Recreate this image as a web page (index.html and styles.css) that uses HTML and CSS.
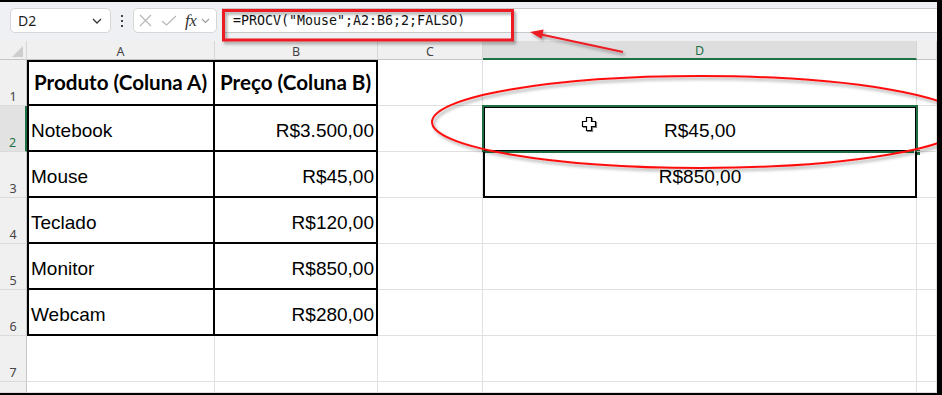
FILE: index.html
```html
<!DOCTYPE html>
<html lang="pt-BR">
<head>
<meta charset="utf-8">
<title>PROCV</title>
<link rel="stylesheet" href="styles.css">
</head>
<body>
<div class="frame">
  <div class="screen">
    <div class="toolbar">
      <div class="namebox">
        <span class="ref">D2</span>
        <svg class="chev" width="10" height="6" viewBox="0 0 10 6"><path d="M1 1 L5 5 L9 1" fill="none" stroke="#333" stroke-width="1.3"/></svg>
      </div>
      <div class="kebab"><i></i><i></i><i></i></div>
      <div class="fxbox">
        <svg width="13" height="13" viewBox="0 0 13 13"><path d="M1 1 L12 12 M12 1 L1 12" stroke="#b8b8b8" stroke-width="1.2" fill="none"/></svg>
        <svg class="ok" width="16" height="11" viewBox="0 0 16 11"><path d="M1 6 L5.5 10 L15 1" stroke="#b8b8b8" stroke-width="1.2" fill="none"/></svg>
        <span class="fx">fx</span>
        <svg width="9" height="6" viewBox="0 0 9 6"><path d="M1 1 L4.5 4.5 L8 1" fill="none" stroke="#9a9a9a" stroke-width="1.1"/></svg>
      </div>
      <div class="formula">=PROCV("Mouse";A2:B6;2;FALSO)</div>
    </div>

    <div class="sheet">
      <div class="h corner"><span class="tri"></span></div>
      <div class="h">A</div>
      <div class="h">B</div>
      <div class="h">C</div>
      <div class="h sel">D</div>
      <div class="h"></div>

      <div class="r">1</div>
      <div class="c t tl tt th">Produto (Coluna A)</div>
      <div class="c t tt th">Preço (Coluna B)</div>
      <div class="c"></div>
      <div class="c"></div>
      <div class="c"></div>

      <div class="r sel">2</div>
      <div class="c t tl">Notebook</div>
      <div class="c t num">R$3.500,00</div>
      <div class="c"></div>
      <div class="c t tl tt mid active">R$45,00<span class="selbox"><span class="handle"></span></span></div>
      <div class="c"></div>

      <div class="r">3</div>
      <div class="c t tl">Mouse</div>
      <div class="c t num">R$45,00</div>
      <div class="c"></div>
      <div class="c t tl mid">R$850,00</div>
      <div class="c"></div>

      <div class="r">4</div>
      <div class="c t tl">Teclado</div>
      <div class="c t num">R$120,00</div>
      <div class="c"></div>
      <div class="c"></div>
      <div class="c"></div>

      <div class="r">5</div>
      <div class="c t tl">Monitor</div>
      <div class="c t num">R$850,00</div>
      <div class="c"></div>
      <div class="c"></div>
      <div class="c"></div>

      <div class="r">6</div>
      <div class="c t tl">Webcam</div>
      <div class="c t num">R$280,00</div>
      <div class="c"></div>
      <div class="c"></div>
      <div class="c"></div>

      <div class="r">7</div>
      <div class="c"></div>
      <div class="c"></div>
      <div class="c"></div>
      <div class="c"></div>
      <div class="c"></div>

      <div class="r"></div>
      <div class="c"></div>
      <div class="c"></div>
      <div class="c"></div>
      <div class="c"></div>
      <div class="c"></div>
    </div>

    <!-- hand-drawn callouts: box on the formula, arrow, ellipse round the result, pointer -->
    <svg class="marks" width="942" height="395" viewBox="0 0 942 395">
      <defs>
        <filter id="shade" x="-10%" y="-30%" width="120%" height="170%">
          <feDropShadow dx="2" dy="2.5" stdDeviation="1.6" flood-color="#000" flood-opacity="0.35"/>
        </filter>
        <filter id="shade2" x="-20%" y="-20%" width="140%" height="140%">
          <feDropShadow dx="1" dy="1" stdDeviation="0.6" flood-color="#000" flood-opacity="0.5"/>
        </filter>
      </defs>
      <rect x="223.5" y="10.5" width="289" height="29.5" fill="none" stroke="#ec1c24" stroke-width="3" filter="url(#shade)"/>
      <g filter="url(#shade)">
        <line x1="623" y1="52" x2="540" y2="34.2" stroke="#ec1c24" stroke-width="2"/>
        <polygon points="530,32 543.6,29.6 541.6,38.8" fill="#ec1c24"/>
      </g>
      <ellipse cx="700" cy="122" rx="268" ry="46" fill="none" stroke="#ff1010" stroke-width="2" filter="url(#shade)"/>
      <path d="M586.5 117.5 h5 v4 h4 v5 h-4 v4 h-5 v-4 h-4 v-5 h4 z" fill="#fff" stroke="#000" stroke-width="1.2" filter="url(#shade2)"/>
    </svg>
  </div>
</div>
</body>
</html>
```

FILE: styles.css
```css
body {
  margin: 0;
  background: #fff;
}

.frame {
  width: 942px;
  height: 395px;
  box-sizing: border-box;
  border-top: 2px solid #000;
  border-right: 5px solid #000;
  border-bottom: 2px solid #000;
}

.screen {
  position: relative;
  width: 937px;
  height: 391px;
  overflow: hidden;
  display: flex;
  flex-direction: column;
  background: #fff;
}

/* formula bar */
.toolbar {
  flex: none;
  height: 39px;
  box-sizing: border-box;
  padding: 6px 0 8px 10px;
  background: #eff0f3;
  display: flex;
  align-items: stretch;
}

.namebox {
  width: 101px;
  box-sizing: border-box;
  background: #fff;
  border: 1px solid #d6d6d6;
  border-radius: 5px;
  display: flex;
  align-items: center;
  justify-content: space-between;
  padding: 0 8px 0 7px;
  font: 14px "Noto Sans", sans-serif;
  color: #1f1f1f;
}

.kebab {
  width: 22px;
  display: flex;
  flex-direction: column;
  align-items: center;
  justify-content: center;
  gap: 3px;
}

.kebab i {
  width: 2px;
  height: 2px;
  background: #444;
}

.fxbox {
  width: 84px;
  box-sizing: border-box;
  background: #fff;
  border: 1px solid #d6d6d6;
  border-radius: 5px;
  display: flex;
  align-items: center;
  padding-left: 5px;
  gap: 8px;
}

.fxbox .ok {
  margin-left: 1px;
}

.fx {
  font: italic 17px "Liberation Serif", serif;
  color: #333;
  margin-right: -3px;
  letter-spacing: -0.5px;
}

.formula {
  flex: 1;
  margin-left: 5px;
  background: #fff;
  border-top: 1px solid #c9c9c9;
  border-bottom: 1px solid #c9c9c9;
  padding-left: 11px;
  display: flex;
  align-items: center;
  font: 13.3px "DejaVu Sans Mono", monospace;
  color: #111;
  white-space: pre;
}

/* worksheet grid */
.sheet {
  flex: 1;
  display: grid;
  grid-template-columns: 27px 188px 163px 105px 434px 20px;
  grid-template-rows: 19px repeat(7, 46px) 1fr;
}

.h {
  box-sizing: border-box;
  background: #f0f0f0;
  border-right: 1px solid #d6d6d6;
  border-bottom: 1px solid #c4c4c4;
  display: flex;
  align-items: center;
  justify-content: center;
  padding-top: 2px;
  font: 12.5px "Noto Sans", sans-serif;
  color: #444;
}

.h.sel {
  background: #dedede;
  border-bottom: 2px solid #1e7145;
  color: #1e7145;
}

.corner {
  justify-content: flex-end;
  align-items: flex-end;
  padding: 0 3px 2px 0;
}

.tri {
  width: 0;
  height: 0;
  border-left: 11px solid transparent;
  border-bottom: 11px solid #cdcdcd;
}

.r {
  box-sizing: border-box;
  background: #f0f0f0;
  border-right: 1px solid #c8c8c8;
  border-bottom: 1px solid #dadada;
  display: flex;
  align-items: flex-end;
  justify-content: center;
  padding-bottom: 0;
  font: 12.5px "Noto Sans", sans-serif;
  color: #444;
}

.r.sel {
  background: #e2e2e2;
  border-right: 2px solid #1e7145;
  color: #1e7145;
}

.c {
  position: relative;
  box-sizing: border-box;
  border-right: 1px solid #e0e0e0;
  border-bottom: 1px solid #e0e0e0;
  display: flex;
  align-items: flex-end;
  padding: 0 2px 8px 2px;
  font: 19px "Liberation Sans", Arial, sans-serif;
  color: #000;
  white-space: nowrap;
}

/* bordered range */
.t {
  border-right: 2px solid #000;
  border-bottom: 2px solid #000;
}

.tl {
  border-left: 2px solid #000;
}

.tt {
  border-top: 2px solid #000;
}

.th {
  font: bold 20.6px Lato, sans-serif;
  padding-left: 5px;
  padding-bottom: 10px;
}

.num {
  justify-content: flex-end;
}

.mid {
  justify-content: center;
}

/* active cell outline and fill handle */
.selbox {
  position: absolute;
  left: -3px;
  top: -3px;
  right: -3px;
  bottom: -3px;
  border: 2px solid #1e6e42;
}

.handle {
  position: absolute;
  right: -4px;
  bottom: -4px;
  width: 5px;
  height: 5px;
  background: #1e6e42;
  outline: 1px solid #fff;
}

.marks {
  position: absolute;
  left: 0;
  top: -2px;
  pointer-events: none;
}
```
